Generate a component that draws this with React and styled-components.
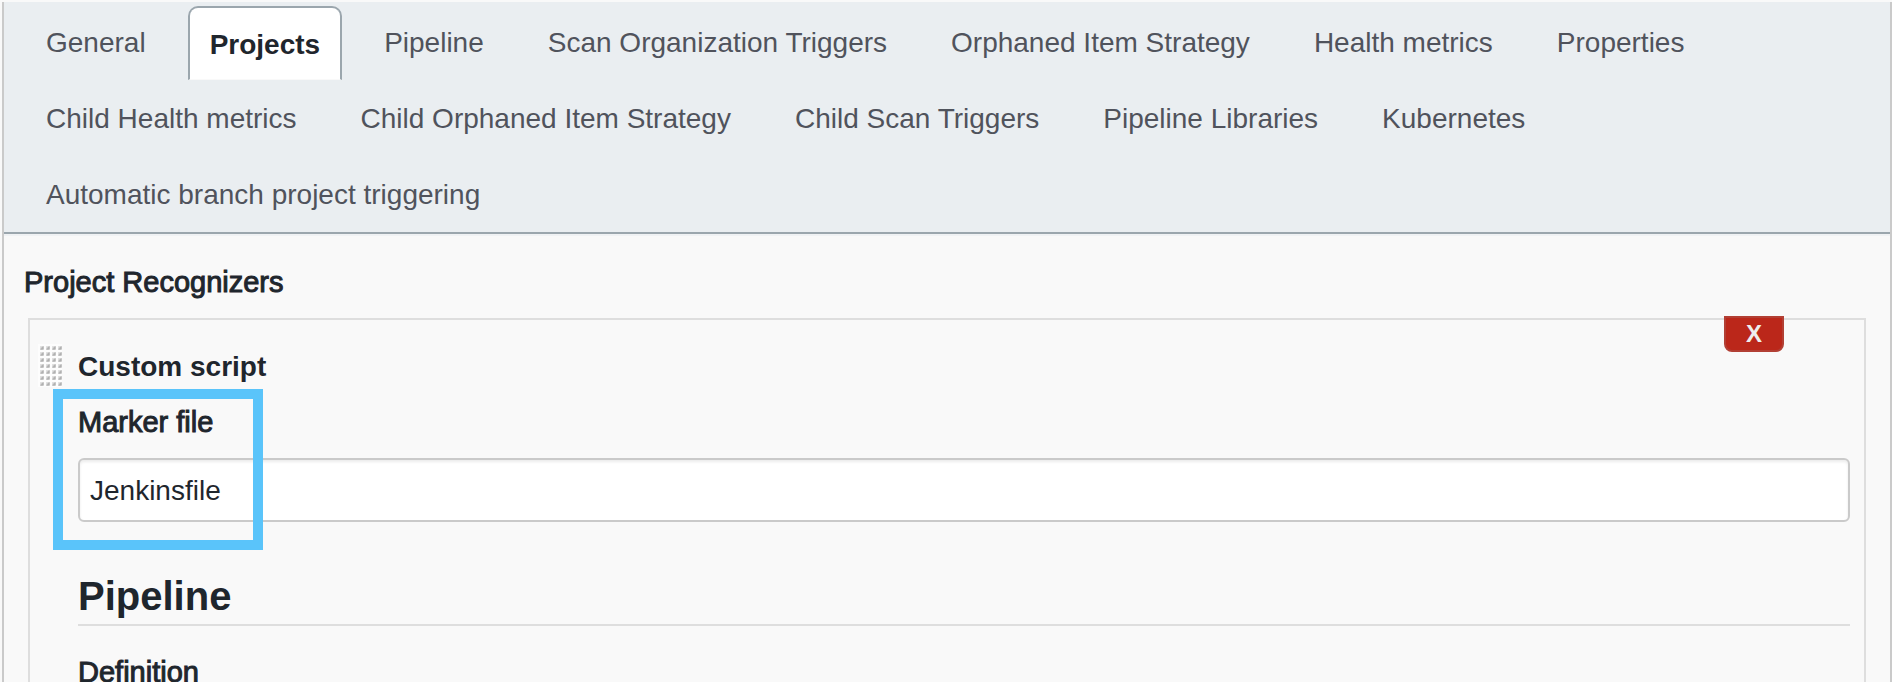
import React, { useState } from "react";
import styled, { createGlobalStyle, css } from "styled-components";

const GlobalStyle = createGlobalStyle`
  *, *::before, *::after { box-sizing: border-box; }
  body {
    margin: 0;
    background: #f9f9f9;
    color: #1f262d;
    font-family: "Liberation Sans", Arial, Helvetica, sans-serif;
    font-size: 28px;
    line-height: 36px;
  }
`;

const Page = styled.main`
  display: flex;
  height: 100vh;
  padding: 2px 0 0 2px;
  overflow: hidden;
`;

const Frame = styled.div`
  flex: 1;
  min-width: 0;
  border: solid #cacaca;
  border-width: 0 2px;
`;

const TabBar = styled.div`
  display: flex;
  flex-wrap: wrap;
  gap: 2px 20px;
  padding: 4px 20px 0;
  background: #eaeef1;
  border-bottom: 2px solid #9ba6ad;
`;

const Tab = styled.button`
  height: 74px;
  padding: 0 20px;
  border: 2px solid transparent;
  background: transparent;
  color: #50535c;
  font: inherit;
  cursor: pointer;

  ${({ $active }) =>
    $active &&
    css`
      padding: 2px 20px 0;
      border-color: #9ba6ad;
      border-bottom: 1px solid #f9f9f9;
      border-radius: 10px 10px 0 0;
      background: #fff;
      color: #1f262d;
      font-weight: 700;
    `}
`;

const Body = styled.div`
  padding: 28px 20px 0;
  border-top: 2px solid #f0f2f4;
`;

const labelText = css`
  display: block;
  font-size: 29px;
  -webkit-text-stroke: 1px currentColor;
`;

const SectionLabel = styled.div`
  ${labelText}
`;

const FieldLabel = styled.label`
  ${labelText}
`;

const Panel = styled.section`
  position: relative;
  display: flex;
  gap: 16px;
  min-height: 100vh;
  margin: 18px 4px 0;
  padding: 24px 14px 0 8px;
  border: 2px solid #dedede;
`;

const DeleteButton = styled.button`
  position: absolute;
  top: -4px;
  right: 80px;
  width: 60px;
  height: 36px;
  padding: 0;
  border: 2px solid #b23f34;
  border-radius: 0 0 8px 8px;
  background: #bb271a;
  color: #eee;
  font: inherit;
  font-size: 24px;
  font-weight: 700;
  line-height: 32px;
  cursor: pointer;
`;

const Grip = styled.svg`
  flex: none;
  width: 24px;
  height: 43px;
  cursor: move;
`;

const PanelContent = styled.div`
  flex: 1;
  min-width: 0;
  padding-top: 5px;
`;

const ScriptTitle = styled.div`
  font-weight: 700;
`;

const Field = styled.div`
  position: relative;
  display: flex;
  flex-direction: column;
  gap: 18px;
  margin-top: 19px;
`;

const TextInput = styled.input`
  width: 100%;
  height: 64px;
  padding: 2px 10px 0;
  border: 2px solid #cacaca;
  border-radius: 6px;
  background: #fff;
  box-shadow: inset 0 2px 3px rgba(0, 0, 0, 0.08);
  color: inherit;
  font: inherit;
  outline: none;
`;

const Highlight = styled.div`
  position: absolute;
  top: -15px;
  left: -25px;
  width: 210px;
  height: 161px;
  border: 10px solid #5ac4fa;
  pointer-events: none;
`;

const SectionHeading = styled.h2`
  margin: 50px 0 28px;
  padding-bottom: 4px;
  border-bottom: 2px solid #dedede;
  font-size: 40px;
  line-height: 48px;
`;

const tabs = [
  "General",
  "Projects",
  "Pipeline",
  "Scan Organization Triggers",
  "Orphaned Item Strategy",
  "Health metrics",
  "Properties",
  "Child Health metrics",
  "Child Orphaned Item Strategy",
  "Child Scan Triggers",
  "Pipeline Libraries",
  "Kubernetes",
  "Automatic branch project triggering",
];

function DragGrip() {
  return (
    <Grip viewBox="0 0 24 43" aria-hidden="true">
      <defs>
        <pattern id="grip-dot" width="6" height="6" patternUnits="userSpaceOnUse">
          <rect width="6" height="6" fill="#fdfdfd" />
          <rect x="2" y="2" width="4" height="4" fill="#e2e2e2" />
          <path d="M2 6V4.5L4.5 2H6V5L5 6Z" fill="#cecece" />
          <path d="M3 5.4V4.5L4.5 3H5.4V4.5L4.5 5.4Z" fill="#b0b0b0" />
        </pattern>
      </defs>
      <rect width="24" height="43" fill="url(#grip-dot)" />
    </Grip>
  );
}

export default function App() {
  const [active, setActive] = useState("Projects");
  const [marker, setMarker] = useState("Jenkinsfile");

  return (
    <>
      <GlobalStyle />
      <Page>
        <Frame>
          <TabBar role="tablist">
            {tabs.map((name) => (
              <Tab
                key={name}
                type="button"
                role="tab"
                aria-selected={name === active}
                $active={name === active}
                onClick={() => setActive(name)}
              >
                {name}
              </Tab>
            ))}
          </TabBar>
          <Body>
            <SectionLabel>Project Recognizers</SectionLabel>
            <Panel>
              <DragGrip />
              <PanelContent>
                <ScriptTitle>Custom script</ScriptTitle>
                <Field>
                  <FieldLabel htmlFor="marker-file">Marker file</FieldLabel>
                  <TextInput
                    id="marker-file"
                    type="text"
                    value={marker}
                    onChange={(e) => setMarker(e.target.value)}
                  />
                  <Highlight />
                </Field>
                <SectionHeading>Pipeline</SectionHeading>
                <SectionLabel>Definition</SectionLabel>
              </PanelContent>
              <DeleteButton type="button">X</DeleteButton>
            </Panel>
          </Body>
        </Frame>
      </Page>
    </>
  );
}
